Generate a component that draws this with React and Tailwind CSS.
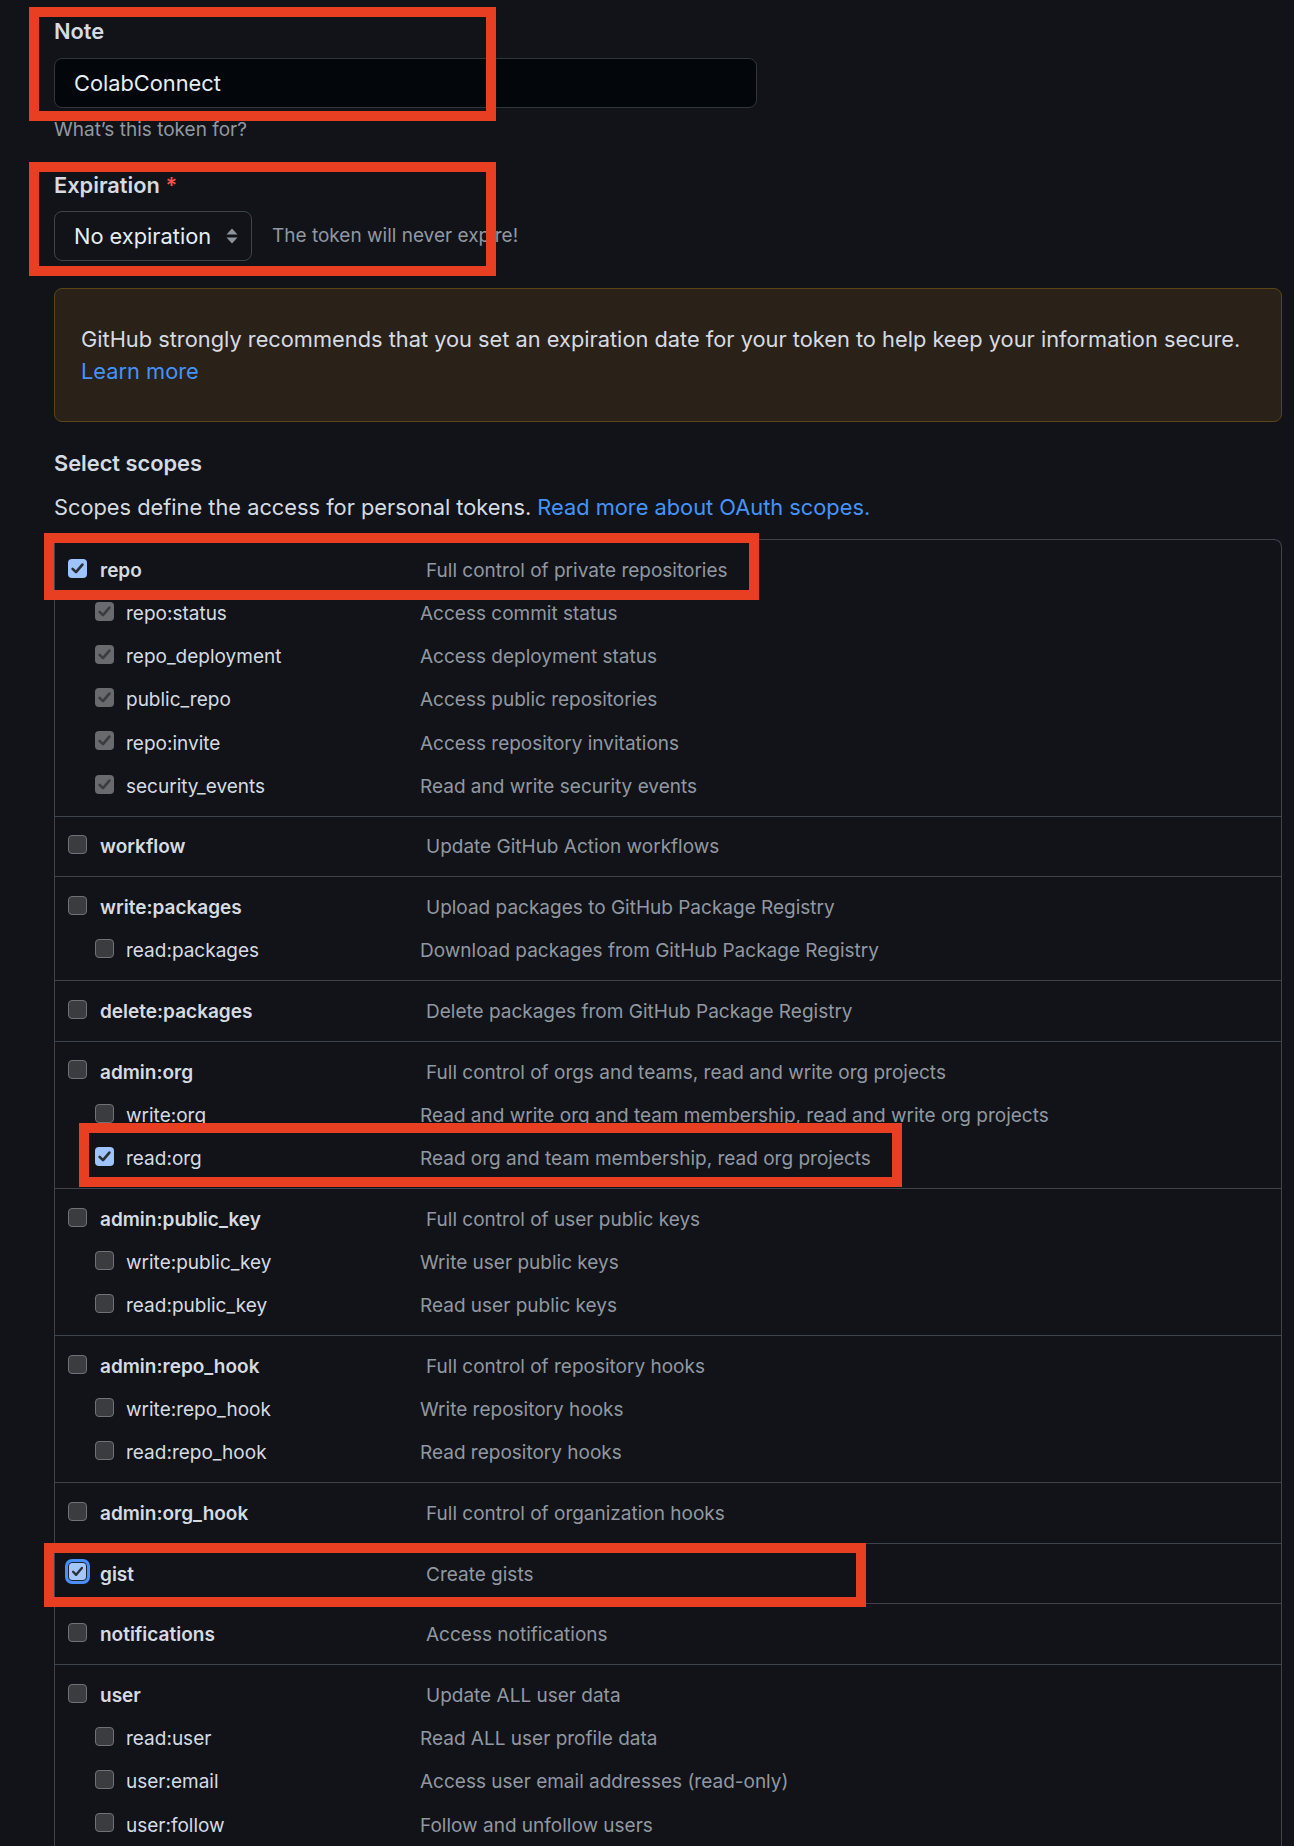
// Personal access token form (GitHub dark) with red annotation boxes

const scopeGroups = [
  {
    name: "repo",
    desc: "Full control of private repositories",
    checked: true,
    children: [
      { name: "repo:status", desc: "Access commit status", state: "disabled" },
      { name: "repo_deployment", desc: "Access deployment status", state: "disabled" },
      { name: "public_repo", desc: "Access public repositories", state: "disabled" },
      { name: "repo:invite", desc: "Access repository invitations", state: "disabled" },
      { name: "security_events", desc: "Read and write security events", state: "disabled" },
    ],
  },
  { name: "workflow", desc: "Update GitHub Action workflows", children: [] },
  {
    name: "write:packages",
    desc: "Upload packages to GitHub Package Registry",
    children: [{ name: "read:packages", desc: "Download packages from GitHub Package Registry" }],
  },
  { name: "delete:packages", desc: "Delete packages from GitHub Package Registry", children: [] },
  {
    name: "admin:org",
    desc: "Full control of orgs and teams, read and write org projects",
    children: [
      { name: "write:org", desc: "Read and write org and team membership, read and write org projects" },
      { name: "read:org", desc: "Read org and team membership, read org projects", state: "checked" },
    ],
  },
  {
    name: "admin:public_key",
    desc: "Full control of user public keys",
    children: [
      { name: "write:public_key", desc: "Write user public keys" },
      { name: "read:public_key", desc: "Read user public keys" },
    ],
  },
  {
    name: "admin:repo_hook",
    desc: "Full control of repository hooks",
    children: [
      { name: "write:repo_hook", desc: "Write repository hooks" },
      { name: "read:repo_hook", desc: "Read repository hooks" },
    ],
  },
  { name: "admin:org_hook", desc: "Full control of organization hooks", children: [] },
  { name: "gist", desc: "Create gists", checked: true, focused: true, children: [] },
  { name: "notifications", desc: "Access notifications", children: [] },
  {
    name: "user",
    desc: "Update ALL user data",
    children: [
      { name: "read:user", desc: "Read ALL user profile data" },
      { name: "user:email", desc: "Access user email addresses (read-only)" },
      { name: "user:follow", desc: "Follow and unfollow users" },
    ],
  },
];

const Check = ({ color }) => (
  <svg viewBox="0 0 19 19" className="w-[19px] h-[19px]">
    <path
      d="M4.6 9.8 L8 13.2 L14.4 5.6"
      fill="none"
      stroke={color}
      strokeWidth="2.6"
      strokeLinecap="round"
      strokeLinejoin="round"
    />
  </svg>
);

const Checkbox = ({ state, focused }) => {
  if (state === "checked") {
    return (
      <span
        className={
          focused
            ? "mb-[6px] shrink-0 w-[19px] h-[19px] rounded-[4px] bg-[#a3c6ff] border border-[#1c2433] ring-[3px] ring-[#4a8ef8] flex items-center justify-center"
            : "mb-[6px] shrink-0 w-[19px] h-[19px] rounded-[4px] bg-[#9dc4ff] flex items-center justify-center"
        }
      >
        <Check color="#2b2e33" />
      </span>
    );
  }
  if (state === "disabled") {
    return (
      <span className="mb-[6px] shrink-0 w-[19px] h-[19px] rounded-[4px] bg-[#686a6e] flex items-center justify-center">
        <Check color="#3a3c40" />
      </span>
    );
  }
  return (
    <span className="mb-[6px] shrink-0 w-[19px] h-[19px] rounded-[4px] bg-[#3b3c3f] border-[1.5px] border-[#6f7176]" />
  );
};

const ScopeGroup = ({ group }) => (
  <div className="pt-[9.5px] pb-[7px] border-b border-[#3d444d]">
    <div className="h-[43.2px] flex items-center pl-[13px]">
      <Checkbox state={group.checked ? "checked" : "none"} focused={group.focused} />
      <span className="ml-[13px] w-[326px] shrink-0 font-semibold text-[#d6dbe2]">
        {group.name}
      </span>
      <span className="text-[#9198a1]">{group.desc}</span>
    </div>
    {group.children.map((child) => (
      <div key={child.name} className="h-[43.2px] flex items-center pl-[40px]">
        <Checkbox state={child.state || "none"} />
        <span className="ml-[12px] w-[294px] shrink-0 text-[#d6dbe2]">{child.name}</span>
        <span className="text-[#9198a1]">{child.desc}</span>
      </div>
    ))}
  </div>
);

const Annotation = ({ className }) => (
  <div className={`absolute border-[10px] border-[#e83e21] pointer-events-none ${className}`} />
);

export default function App() {
  return (
    <div
      className="relative h-[1846px] overflow-hidden bg-[#111318] text-[#d6dbe2]"
      style={{ fontFamily: "Inter, 'Liberation Sans', sans-serif" }}
    >
      <div className="pl-[54px] pr-[12px] pt-[16px] w-[1294px]">
        {/* Note */}
        <div className="text-[21.8px] leading-[30px] font-semibold">Note</div>
        <div className="mt-[12px] w-[703px] h-[50px] rounded-[8px] border border-[#30363d] bg-[#03060a] flex items-center px-[19px] text-[21.8px] text-[#e6edf3]">
          ColabConnect
        </div>
        <div className="mt-[9px] text-[19px] leading-[26px] text-[#9198a1]">
          What’s this token for?
        </div>

        {/* Expiration */}
        <div className="mt-[27px] text-[21.8px] leading-[30px] font-semibold">
          Expiration <span className="text-[#f85149]">*</span>
        </div>
        <div className="mt-[11px] flex items-center">
          <div className="w-[198px] h-[50px] rounded-[8px] border border-[#3d444d] flex items-center pl-[19px] pr-[13px] justify-between text-[21.8px] text-[#e6edf3]">
            <span>No expiration</span>
            <svg viewBox="0 0 12 16" className="w-[12px] h-[16px]">
              <path d="M6 0.5 L11.5 6.5 L0.5 6.5 Z" fill="#8d939c" />
              <path d="M6 15.5 L11.5 9.5 L0.5 9.5 Z" fill="#8d939c" />
            </svg>
          </div>
          <span className="ml-[20px] text-[19px] text-[#9198a1]">The token will never expire!</span>
        </div>

        {/* Warning */}
        <div className="mt-[27px] rounded-[8px] border border-[#5b4516] bg-[#2a2119] pl-[26px] pt-[34px] pb-[34px] text-[21.8px] leading-[32px] text-[#d6dbe2]">
          <p>
            GitHub strongly recommends that you set an expiration date for your token to help keep your
            information secure.
          </p>
          <p className="text-[#4493f8]">Learn more</p>
        </div>

        {/* Scopes */}
        <div className="mt-[26px] text-[21.8px] leading-[30px] font-semibold">Select scopes</div>
        <div className="mt-[14px] text-[21.8px] leading-[30px]">
          Scopes define the access for personal tokens.{" "}
          <span className="text-[#4493f8]">Read more about OAuth scopes.</span>
        </div>

        <div className="mt-[17px] border-t border-l border-r border-[#3d444d] rounded-tr-[8px] text-[19px]">
          {scopeGroups.map((g) => (
            <ScopeGroup key={g.name} group={g} />
          ))}
        </div>
      </div>

      {/* red annotation boxes */}
      <Annotation className="left-[29px] top-[7px] w-[467px] h-[114px]" />
      <Annotation className="left-[29px] top-[162px] w-[467px] h-[114px]" />
      <Annotation className="left-[44px] top-[533px] w-[715px] h-[67px]" />
      <Annotation className="left-[79px] top-[1123px] w-[823px] h-[64px]" />
      <Annotation className="left-[44px] top-[1543px] w-[822px] h-[64px]" />
    </div>
  );
}
